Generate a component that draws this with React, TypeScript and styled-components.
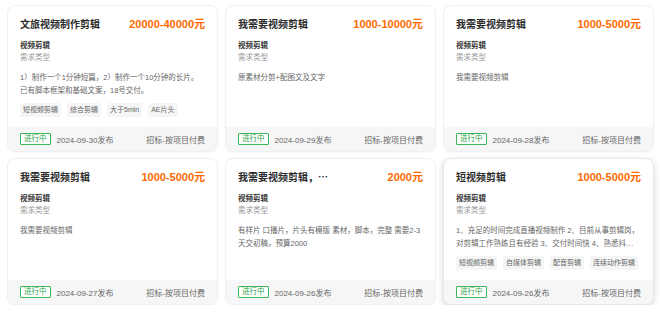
import React from 'react';
import styled, { createGlobalStyle } from 'styled-components';

type Demand = {
  title: string;
  price: string;
  category: string;
  desc: string;
  tags: string[];
  date: string;
  clamp?: boolean;
  active?: boolean;
};

const demands: Demand[] = [
  {
    title: '文旅视频制作剪辑',
    price: '20000-40000元',
    category: '视频剪辑',
    desc: '1）制作一个1分钟短篇，2）制作一个10分钟的长片。\n已有脚本框架和基础文案，18号交付。',
    tags: ['短视频剪辑', '综合剪辑', '大于5min', 'AE片头'],
    date: '2024-09-30',
  },
  {
    title: '我需要视频剪辑',
    price: '1000-10000元',
    category: '视频剪辑',
    desc: '原素材分剪+配图文及文字',
    tags: [],
    date: '2024-09-29',
  },
  {
    title: '我需要视频剪辑',
    price: '1000-5000元',
    category: '视频剪辑',
    desc: '我需要视频剪辑',
    tags: [],
    date: '2024-09-28',
  },
  {
    title: '我需要视频剪辑',
    price: '1000-5000元',
    category: '视频剪辑',
    desc: '我需要视频剪辑',
    tags: [],
    date: '2024-09-27',
  },
  {
    title: '我需要视频剪辑，口播片头制作',
    price: '2000元',
    category: '视频剪辑',
    desc: '有样片 口播片，片头有模版 素材，脚本，完整 需要2-3\n天交初稿，预算2000',
    tags: [],
    date: '2024-09-26',
  },
  {
    title: '短视频剪辑',
    price: '1000-5000元',
    category: '视频剪辑',
    desc: '1、充足的时间完成直播视频制作 2、目前从事剪辑岗，对剪辑工作熟练且有经验 3、交付时间快 4、熟悉抖音快手等平台',
    tags: ['短视频剪辑', '自媒体剪辑', '配音剪辑', '连续动作剪辑'],
    date: '2024-09-26',
    clamp: true,
    active: true,
  },
];

const GlobalStyle = createGlobalStyle`
  html, body {
    margin: 0;
    padding: 0;
    overflow: hidden;
    background: #fff;
  }
  body {
    font-family: "Liberation Sans", "Noto Sans CJK SC", sans-serif;
    color: #333;
  }
`;

const App = () => {
  return (
    <>
      <GlobalStyle />
      <Grid>
        {demands.map((d, i) => (
          <Card key={i} $active={d.active}>
            <CardBody>
              <CardHead>
                <CardTitle>{d.title}</CardTitle>
                <CardPrice>{d.price}</CardPrice>
              </CardHead>
              <CardMeta>
                <MetaValue>{d.category}</MetaValue>
                <MetaLabel>需求类型</MetaLabel>
              </CardMeta>
              <CardDesc $clamp={d.clamp}>{d.desc}</CardDesc>
              {d.tags.length > 0 && (
                <TagList>
                  {d.tags.map((t) => (
                    <Tag key={t}>{t}</Tag>
                  ))}
                </TagList>
              )}
            </CardBody>
            <CardFoot>
              <Status>进行中</Status>
              <FootDate>{d.date}发布</FootDate>
              <FootMode>招标-按项目付费</FootMode>
            </CardFoot>
          </Card>
        ))}
      </Grid>
    </>
  );
};

const Grid = styled.div`
  display: grid;
  grid-template-columns: repeat(3, 211px);
  column-gap: 7px;
  row-gap: 6px;
  padding: 5px 0 0 7px;
`;

const Card = styled.div<{ $active?: boolean }>`
  box-sizing: border-box;
  height: 147px;
  border: 1px solid ${(p) => (p.$active ? '#e6e6e6' : '#f0f0f0')};
  border-radius: 8px;
  background: #fff;
  display: flex;
  flex-direction: column;
  overflow: hidden;
  box-shadow: ${(p) => (p.$active ? '0 2px 6px rgba(0, 0, 0, 0.16)' : '0 1px 2px rgba(0, 0, 0, 0.03)')};
`;

const CardBody = styled.div`
  flex: 1;
  padding: 10px 12px 0;
  min-height: 0;
`;

const CardHead = styled.div`
  display: flex;
  align-items: center;
  justify-content: space-between;
  height: 16px;
`;

const CardTitle = styled.div`
  font-family: "Noto Sans CJK SC", sans-serif;
  font-size: 10px;
  font-weight: 700;
  color: #2b2b2b;
  line-height: 16px;
  max-width: 92px;
  white-space: nowrap;
  overflow: hidden;
  text-overflow: ellipsis;
`;

const CardPrice = styled.div`
  font-size: 11px;
  font-weight: 700;
  color: #ff6a00;
  line-height: 16px;
  white-space: nowrap;
`;

const CardMeta = styled.div`
  margin-top: 8px;
  font-size: 7.5px;
  line-height: 12px;
`;

const MetaValue = styled.div`
  color: #333;
  font-weight: 700;
`;

const MetaLabel = styled.div`
  color: #999;
`;

const CardDesc = styled.div<{ $clamp?: boolean }>`
  margin-top: 7px;
  font-size: 7.5px;
  line-height: 13px;
  color: #666;
  white-space: pre-line;
  ${(p) =>
    p.$clamp &&
    `
    display: -webkit-box;
    -webkit-line-clamp: 2;
    -webkit-box-orient: vertical;
    overflow: hidden;
    max-height: 26px;
  `}
`;

const TagList = styled.div`
  display: flex;
  gap: 6px;
  margin-top: 6px;
`;

const Tag = styled.span`
  height: 14px;
  line-height: 14px;
  padding: 0 3px;
  background: #f5f5f5;
  border-radius: 2px;
  font-size: 7px;
  color: #666;
`;

const CardFoot = styled.div`
  height: 24px;
  flex-shrink: 0;
  display: flex;
  align-items: center;
  padding: 0 12px;
  background: #f6f6f6;
`;

const Status = styled.span`
  height: 12px;
  box-sizing: border-box;
  line-height: 10px;
  padding: 0 3px;
  border: 1px solid #3db55b;
  border-radius: 1px;
  background: #fff;
  color: #2fa64d;
  font-size: 7.5px;
`;

const FootDate = styled.span`
  margin-left: 6px;
  font-size: 8px;
  color: #666;
`;

const FootMode = styled.span`
  margin-left: auto;
  font-size: 8px;
  color: #666;
`;

export default App;
